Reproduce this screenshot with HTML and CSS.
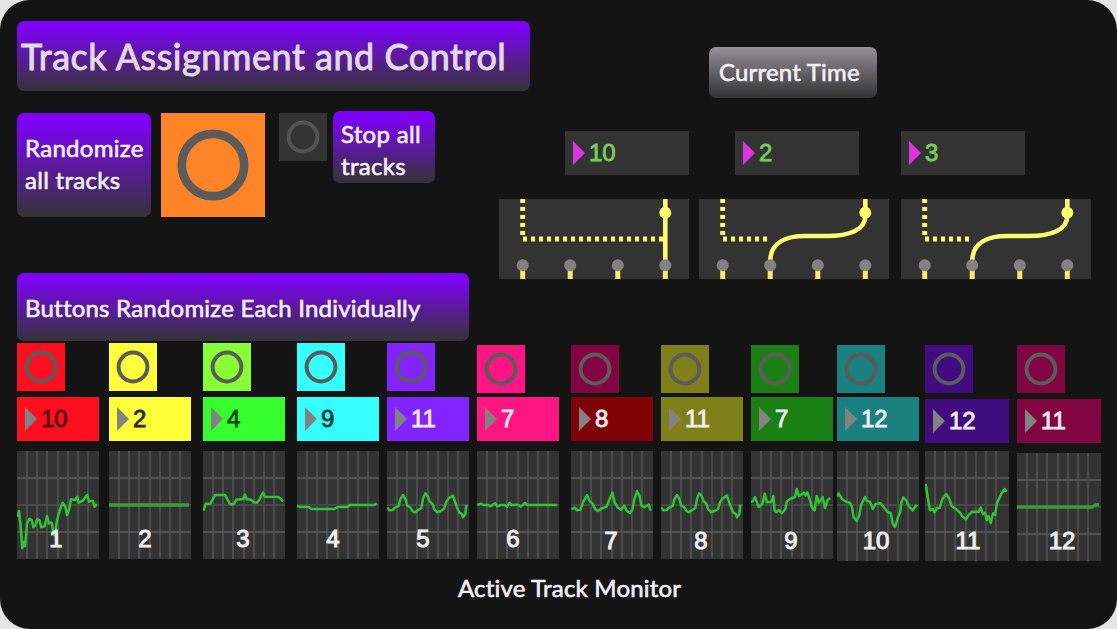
FILE: index.html
```html
<!DOCTYPE html>
<html lang="en">
<head>
<meta charset="utf-8">
<title>Track Assignment and Control</title>
<link rel="stylesheet" href="styles.css">
</head>
<body>
<svg class="defs" aria-hidden="true">
  <symbol id="ring" viewBox="0 0 48 48"><circle cx="24" cy="24" r="14.4" fill="none" stroke="currentColor" stroke-width="4"/></symbol>
  <symbol id="arrow" viewBox="0 0 12 24"><path d="M0 0L12 12L0 24Z" fill="currentColor"/></symbol>
  <symbol id="ports" viewBox="0 0 190 80">
    <path d="M23.7 70V80M71.2 70V80M118.8 70V80M166.3 70V80" stroke="#f5ee68" stroke-width="5"/>
    <g fill="#828282"><circle cx="23.7" cy="66.3" r="6"/><circle cx="71.2" cy="66.3" r="6"/><circle cx="118.8" cy="66.3" r="6"/><circle cx="166.3" cy="66.3" r="6"/></g>
  </symbol>
  <symbol id="curved" viewBox="0 0 190 80">
    <path d="M23.7 0V36" class="dots"/><path d="M24 40H69" class="dots"/>
    <path d="M166.3 0V17C166.3 31 150 37 128 37H106C88 37 71.3 43 71.3 62" class="wire"/>
    <circle cx="166.3" cy="13.7" r="6" fill="#fffb6e"/>
    <use href="#ports"/>
  </symbol>
</svg>
<main class="panel">
  <div class="top">
    <section class="left">
      <h1 class="label title"><span>Track Assignment and Control</span></h1>
      <div class="controls">
        <div class="label randomize"><span>Randomize<br>all tracks</span></div>
        <button class="bang big"><svg><use href="#ring"/></svg></button>
        <button class="bang stop"><svg><use href="#ring"/></svg></button>
        <div class="label stop-label"><span>Stop all<br>tracks</span></div>
      </div>
    </section>
    <section class="right">
      <div class="label time"><span>Current Time</span></div>
      <div class="times">
        <div class="num"><svg><use href="#arrow"/></svg><span>10</span></div>
        <div class="num"><svg><use href="#arrow"/></svg><span>2</span></div>
        <div class="num"><svg><use href="#arrow"/></svg><span>3</span></div>
      </div>
      <div class="switches">
        <svg class="switch" viewBox="0 0 190 80"><path d="M23.7 0V36" class="dots"/><path d="M24 40H166" class="dots"/><path d="M166.3 0V64" class="wire"/><circle cx="166.3" cy="13.7" r="6" fill="#fffb6e"/><use href="#ports"/></svg>
        <svg class="switch" viewBox="0 0 190 80"><use href="#curved"/></svg>
        <svg class="switch" viewBox="0 0 190 80"><use href="#curved"/></svg>
      </div>
    </section>
  </div>
  <h2 class="label individual"><span>Buttons Randomize Each Individually</span></h2>
  <div class="tracks">
    <div class="track t1"><button class="bang"><svg><use href="#ring"/></svg></button><div class="num"><svg><use href="#arrow"/></svg><span>10</span></div>
      <div class="monitor"><svg viewBox="51 33 246 324"><polyline points="51,230 57,213 61,250 67,325 71,306 75,318 79,280 81,250 88,237 95,240 100,262 106,255 112,237 118,240 124,262 134,258 141,228 147,250 155,248 161,285 165,285 170,245 178,215 188,188 196,200 201,225 207,210 213,178 225,180 232,170 236,188 248,182 261,165 267,185 278,182 284,200 290,192"/></svg><span>1</span></div></div>
    <div class="track t2"><button class="bang"><svg><use href="#ring"/></svg></button><div class="num"><svg><use href="#arrow"/></svg><span>2</span></div>
      <div class="monitor flat"><svg viewBox="327 33 246 324"><polyline points="327,195 567,195"/></svg><span>2</span></div></div>
    <div class="track t3"><button class="bang"><svg><use href="#ring"/></svg></button><div class="num"><svg><use href="#arrow"/></svg><span>4</span></div>
      <div class="monitor"><svg viewBox="24 33 246 324"><polyline points="26,212 32,191 46,191 53,178 61,165 90,165 97,177 104,190 111,194 118,190 124,179 144,177 150,164 155,178 168,179 176,187 186,188 194,178 199,166 204,158 209,170 250,171 257,176 264,184"/></svg><span>3</span></div></div>
    <div class="track t4"><button class="bang"><svg><use href="#ring"/></svg></button><div class="num"><svg><use href="#arrow"/></svg><span>9</span></div>
      <div class="monitor"><svg viewBox="306 33 246 324"><polyline points="306,197 314,201 341,201 350,207 418,207 428,201 457,201 464,195 538,195 545,190"/></svg><span>4</span></div></div>
    <div class="track t5"><button class="bang"><svg><use href="#ring"/></svg></button><div class="num"><svg><use href="#arrow"/></svg><span>11</span></div>
      <div class="monitor"><svg viewBox="21 33 246 324"><polyline points="22,202 28,211 38,210 46,202 56,198 61,178 69,165 76,177 82,197 91,202 97,213 105,217 113,211 124,204 129,176 136,160 143,168 149,184 157,191 163,208 172,217 182,213 192,207 198,187 206,175 219,167 226,188 232,205 238,218 245,221 249,232 256,223 259,194"/></svg><span>5</span></div></div>
    <div class="track t6"><button class="bang"><svg><use href="#ring"/></svg></button><div class="num"><svg><use href="#arrow"/></svg><span>7</span></div>
      <div class="monitor"><svg viewBox="291 33 246 324"><polyline points="292,195 302,191 310,195 324,195 332,199 345,190 352,199 363,195 374,195 381,200 388,189 395,195 414,194 423,200 435,189 442,195 532,195"/></svg><span>6</span></div></div>
    <div class="track t7"><button class="bang"><svg><use href="#ring"/></svg></button><div class="num"><svg><use href="#arrow"/></svg><span>8</span></div>
      <div class="monitor"><svg viewBox="18 33 246 324"><polyline points="19,208 29,203 36,211 46,209 55,185 66,165 74,184 82,190 91,208 98,213 109,206 125,200 134,177 142,158 149,187 157,201 168,209 178,197 185,212 195,219 202,209 208,179 216,153 223,166 229,196 237,202 251,194 257,212"/></svg><span>7</span></div></div>
    <div class="track t8"><button class="bang"><svg><use href="#ring"/></svg></button><div class="num"><svg><use href="#arrow"/></svg><span>11</span></div>
      <div class="monitor"><svg viewBox="288 33 246 324"><polyline points="289,202 295,211 305,210 313,202 323,198 328,178 336,165 343,177 349,197 358,202 364,213 372,217 380,211 391,204 396,176 403,160 410,168 416,184 424,191 430,208 439,217 449,213 459,207 465,187 473,175 486,167 493,188 499,205 505,218 512,221 516,232 523,223 526,194"/></svg><span>8</span></div></div>
    <div class="track t9"><button class="bang"><svg><use href="#ring"/></svg></button><div class="num"><svg><use href="#arrow"/></svg><span>7</span></div>
      <div class="monitor"><svg viewBox="18 33 246 324"><polyline points="18,187 24,183 30,171 36,187 41,201 53,190 59,161 66,187 80,185 85,168 89,212 94,217 101,210 111,219 121,207 125,185 135,177 150,171 155,147 162,168 177,158 182,166 187,157 195,181 201,203 209,211 215,168 222,188 233,171 240,204 248,180 256,174"/></svg><span>9</span></div></div>
    <div class="track t10"><button class="bang"><svg><use href="#ring"/></svg></button><div class="num"><svg><use href="#arrow"/></svg><span>12</span></div>
      <div class="monitor"><svg viewBox="276 33 246 330"><polyline points="276,170 281,160 291,177 305,186 315,188 321,202 326,232 335,243 343,225 348,196 360,171 365,182 375,185 383,207 392,192 407,190 418,204 428,217 437,219 443,250 450,261 458,235 466,215 469,188 475,172 485,183 491,198 503,211 512,197 517,199"/></svg><span>10</span></div></div>
    <div class="track t11"><button class="bang"><svg><use href="#ring"/></svg></button><div class="num"><svg><use href="#arrow"/></svg><span>12</span></div>
      <div class="monitor"><svg viewBox="24 33 252 330"><polyline points="26,132 31,165 39,211 47,207 53,217 60,203 68,204 76,177 88,162 97,177 104,198 118,208 128,217 136,229 147,238 154,226 165,215 184,216 191,203 198,222 204,218 209,240 214,228 221,249 228,220 234,225 240,190 248,172 255,158 263,147 269,155"/></svg><span>11</span></div></div>
    <div class="track t12"><button class="bang"><svg><use href="#ring"/></svg></button><div class="num"><svg><use href="#arrow"/></svg><span>11</span></div>
      <div class="monitor flat"><svg viewBox="300 39 252 324"><polyline points="300,201 526,201 534,195 546,194"/></svg><span>12</span></div></div>
  </div>
  <footer class="caption">Active Track Monitor</footer>
</main>
</body>
</html>
```

FILE: styles.css
```css
* { box-sizing: border-box; }
body { margin: 0; background: #e4e4e4; overflow: hidden; font-family: Lato, sans-serif; color: #f4f0f8; }
button { border: 0; padding: 0; }
svg { display: block; }
.defs { position: absolute; width: 0; height: 0; }

.panel { width: 1117px; height: 629px; border-radius: 30px; background: #141414; padding: 21px 16px 0 17px; overflow: hidden; }
.top { display: flex; height: 252px; }
.left { width: 482px; flex: none; }
.right { width: 592px; flex: none; }

.label {
  display: flex; align-items: center; margin: 0; padding-left: 8px; border-radius: 7px;
  background: linear-gradient(#8000ff 5%, #35333b 97%);
  font-size: 24px; line-height: 32px; font-weight: 400; white-space: nowrap;
  -webkit-text-stroke: 0.6px currentColor;
}
.title { width: 513px; height: 70px; padding: 0 0 1px 4px; font-size: 36px; color: #e2dbe0; letter-spacing: 0.53px; -webkit-text-stroke-width: 0.9px; }
.controls { display: flex; margin-top: 20px; }
.randomize { width: 134px; height: 104px; margin: 2px 10px 0 0; padding-bottom: 2px; letter-spacing: 0.3px; }
.stop-label { width: 102px; height: 72px; padding-top: 6px; flex: none; letter-spacing: 0.3px; }
.time { width: 168px; height: 51px; margin: 26px 0 33px 210px; padding: 0 0 2px 10px; background: linear-gradient(#949197, #323232); letter-spacing: 0.2px; }
.individual { width: 452px; height: 68px; padding-top: 2px; letter-spacing: 0.22px; }

.bang { width: 48px; height: 48px; flex: none; color: #5b5b5b; background: var(--button, #333); }
.bang svg { width: 100%; height: 100%; }
.big { width: 104px; height: 104px; margin: 2px 14px 0 0; background: #ff8427; }
.stop { margin: 2px 6px 0 0; color: #535353; }

.num {
  display: flex; align-items: center; width: 100%; height: 44px; padding-left: 8px;
  background: var(--box, #333); color: var(--ink, #f4eef2);
  font: 24px/44px "Liberation Sans", sans-serif; -webkit-text-stroke: 0.8px currentColor;
}
.num svg { width: 12px; height: 24px; margin-right: 4px; color: #828282; }
.times { display: flex; padding-left: 66px; }
.times .num { width: 124px; margin-right: 46px; color: #74d058; }
.times .num:nth-child(2) { margin-right: 42px; }
.times .num svg { color: #dd33e3; }
.switches { display: flex; margin-top: 24px; }
.switch { width: 190px; height: 80px; margin-right: 10px; flex: none; background: #333; }
.switch:nth-child(2) { margin-right: 12px; }
.switch:nth-child(3) { margin-right: 0; }
.dots { fill: none; stroke: #fffb6e; stroke-width: 5; stroke-dasharray: 4 4; }
.wire { fill: none; stroke: #fffb6e; stroke-width: 4.6; }

.tracks { display: grid; grid-template-columns: 92px 94px 94px 90px 90px 94px 90px 90px 86px 88px 92px 84px; height: 220px; margin-top: 2px; }
.track { width: 82px; display: flex; flex-direction: column; }
.track .num { margin: 6px 0 10px; flex: none; }
.monitor {
  position: relative; height: 108px;
  background:
    linear-gradient(transparent 26px, #515151 26px 28px, transparent 28px 53px, #484848 53px 55px, transparent 55px 80px, #515151 80px 82px, transparent 82px),
    linear-gradient(90deg, transparent 75px, #333 75px),
    repeating-linear-gradient(90deg, #333 0 8.1px, #4c4c4c 8.1px 10.15px) 1px 0 no-repeat,
    #333;
}
.monitor svg { width: 100%; height: 100%; }
.monitor polyline { fill: none; stroke: #2fc436; stroke-width: 7.5; stroke-linejoin: round; }
.flat polyline { stroke: #3c9c3c; stroke-width: 10; }
.monitor span {
  position: absolute; left: var(--label, 36px); top: 74px; transform: translateX(-50%);
  font: 24px/28px "Liberation Sans", sans-serif; -webkit-text-stroke: 1px currentColor; color: #f0f0f0;
}

.t1 { --button: #fe0f20; --box: #fe0f20; --ink: #5c0d12; --label: 39px; }
.t2 { --button: #ffff3a; --box: #ffff3a; --ink: #252508; }
.t3 { --button: #87ff34; --box: #35ff2f; --ink: #0c4a0c; --label: 40px; }
.t4 { --button: #36ffff; --box: #36ffff; --ink: #083b3b; }
.t5 { --button: #8124ff; --box: #8124ff; }
.t6 { --button: #ff1683; --box: #ff1683; }
.t7 { --button: #800540; --box: #800308; --label: 40px; }
.t8 { --button: #80801a; --box: #80801a; --label: 40px; }
.t9 { --button: #1a8013; --box: #1a8013; --label: 40px; }
.t10 { --button: #1a8080; --box: #1a8080; --label: 39px; }
.t11 { --button: #400c80; --box: #400c80; --label: 43px; }
.t12 { --button: #800540; --box: #800540; --label: 45px; }
.track:nth-child(n+6) { padding-top: 2px; }
.track:nth-child(n+6) .num { margin-top: 4px; }
.track:nth-child(n+7) .monitor span { top: 76px; }
.t10 .monitor, .t11 .monitor { height: 110px; }
.t11, .t12 { width: 84px; }
.track.t11 .num { margin: 6px 0 8px; }
.track.t12 .num { margin-top: 6px; }
.track.t12 .monitor span { top: 74px; }

.caption { padding-left: 441px; margin-top: 9px; font-size: 24px; line-height: 32px; letter-spacing: 0.2px; -webkit-text-stroke: 0.6px currentColor; }
```
